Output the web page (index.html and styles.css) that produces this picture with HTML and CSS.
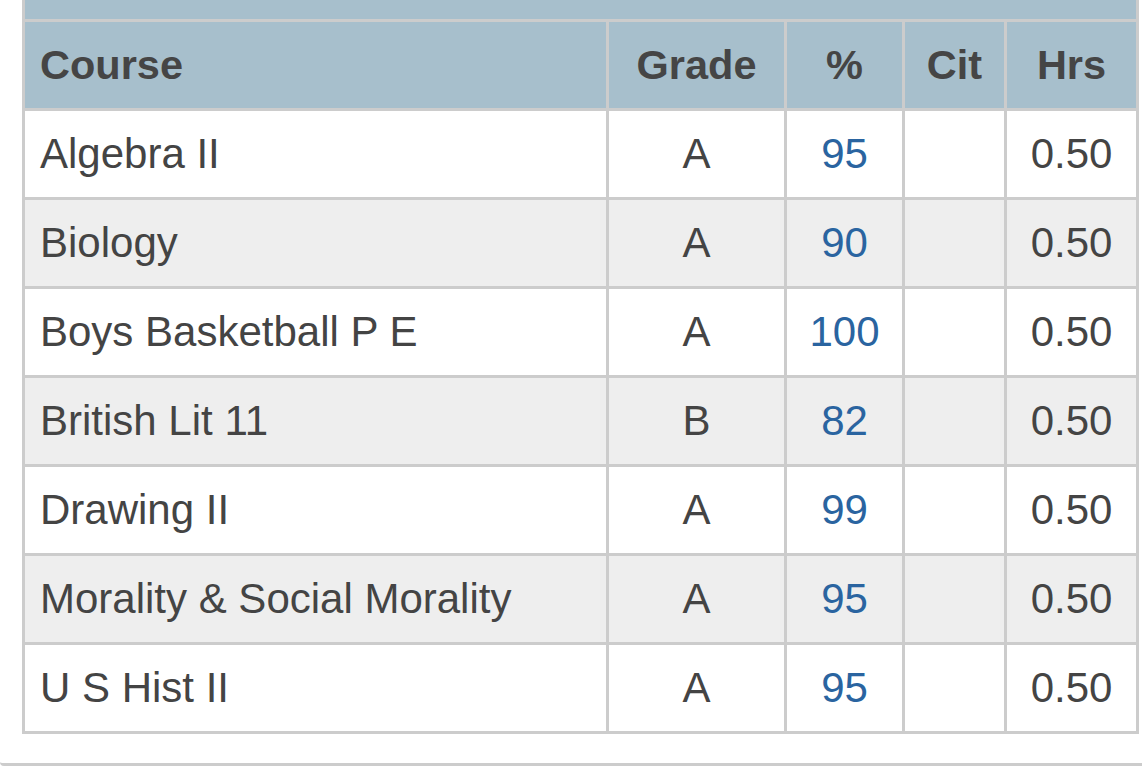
FILE: index.html
```html
<!DOCTYPE html>
<html lang="en">
<head>
<meta charset="utf-8">
<title>Grades</title>
<link rel="stylesheet" href="styles.css">
</head>
<body>
<div class="page">
  <div class="term-bar"></div>
  <table class="grades">
    <thead>
      <tr>
        <th class="c-course">Course</th>
        <th class="c-grade">Grade</th>
        <th class="c-pct">%</th>
        <th class="c-cit">Cit</th>
        <th class="c-hrs">Hrs</th>
      </tr>
    </thead>
    <tbody>
      <tr><td class="course">Algebra II</td><td>A</td><td class="pct">95</td><td></td><td>0.50</td></tr>
      <tr><td class="course">Biology</td><td>A</td><td class="pct">90</td><td></td><td>0.50</td></tr>
      <tr><td class="course">Boys Basketball P E</td><td>A</td><td class="pct">100</td><td></td><td>0.50</td></tr>
      <tr><td class="course">British Lit 11</td><td>B</td><td class="pct">82</td><td></td><td>0.50</td></tr>
      <tr><td class="course">Drawing II</td><td>A</td><td class="pct">99</td><td></td><td>0.50</td></tr>
      <tr><td class="course">Morality &amp; Social Morality</td><td>A</td><td class="pct">95</td><td></td><td>0.50</td></tr>
      <tr><td class="course">U S Hist II</td><td>A</td><td class="pct">95</td><td></td><td>0.50</td></tr>
    </tbody>
  </table>
</div>
</body>
</html>
```

FILE: styles.css
```css
html, body {
  margin: 0;
  padding: 0;
  background: #ffffff;
}

body {
  font-family: "Liberation Sans", Arial, Helvetica, sans-serif;
  color: #444444;
  width: 1142px;
  height: 775px;
  overflow: hidden;
}

.page {
  padding: 0 3px 29px 22px;
  border-bottom: 3px solid #cccccc;
  border-bottom-left-radius: 4px;
  width: 1117px;
}

.term-bar {
  height: 19px;
  background: #a7bfcc;
  border-left: 3px solid #cccccc;
  border-right: 3px solid #cccccc;
  border-bottom: 3px solid #cccccc;
}

.grades {
  border-collapse: separate;
  border-spacing: 0;
  table-layout: fixed;
  width: 1117px;
}

.grades th,
.grades td {
  box-sizing: border-box;
  height: 89px;
  padding: 0 4px;
  border-right: 3px solid #cccccc;
  border-bottom: 3px solid #cccccc;
  text-align: center;
  vertical-align: middle;
  font-size: 42px;
  line-height: 1.15;
  white-space: nowrap;
}

.grades th:first-child,
.grades td:first-child {
  border-left: 3px solid #cccccc;
  text-align: left;
  padding-left: 15px;
}

.grades th {
  background: #a7bfcc;
  font-weight: bold;
  font-size: 41.5px;
  color: #454545;
}

.c-course { width: 587px; }
.c-grade { width: 178px; }
.c-pct { width: 118px; }
.c-cit { width: 102px; }
.c-hrs { width: 132px; }

.grades tbody tr:nth-child(odd) td { background: #ffffff; }
.grades tbody tr:nth-child(even) td { background: #eeeeee; }

.grades td.pct { color: #2a64a0; }
```
